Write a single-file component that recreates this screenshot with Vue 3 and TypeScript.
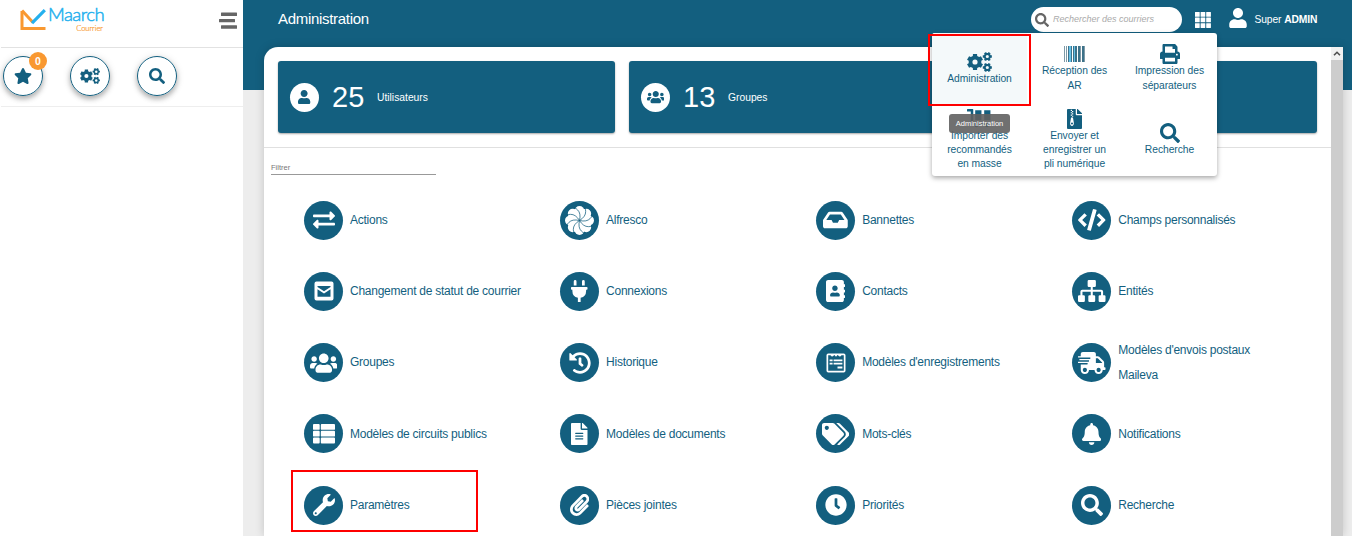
<script setup lang="ts">
interface Icon {
  w: number
  h: number
  d: string
}

const box = (x: number, y: number, w: number, h: number): string => `M${x} ${y}h${w}v${h}h${-w}z`

const rbox = (x: number, y: number, w: number, h: number, r: number): string =>
  `M${x + r} ${y}h${w - 2 * r}a${r} ${r} 0 0 1 ${r} ${r}v${h - 2 * r}a${r} ${r} 0 0 1 ${-r} ${r}h${2 * r - w}a${r} ${r} 0 0 1 ${-r} ${-r}v${2 * r - h}a${r} ${r} 0 0 1 ${r} ${-r}z`

const disc = (x: number, y: number, r: number): string =>
  `M${x - r} ${y}a${r} ${r} 0 1 0 ${2 * r} 0a${r} ${r} 0 1 0 ${-2 * r} 0z`

function gear(cx: number, cy: number, outer: number, inner: number, hole: number, teeth: number, turn: number): string {
  const points: string[] = []
  const step = (Math.PI * 2) / teeth
  for (let i = 0; i < teeth; i++) {
    const a = turn + i * step
    const corners: [number, number][] = [
      [-0.33, inner],
      [-0.24, outer],
      [0.24, outer],
      [0.33, inner],
    ]
    for (const [k, r] of corners) {
      points.push(`${(cx + Math.cos(a + k * step) * r).toFixed(1)} ${(cy + Math.sin(a + k * step) * r).toFixed(1)}`)
    }
  }
  return `M${points.join('L')}z${disc(cx, cy, hole)}`
}

const icons: Record<string, Icon> = {
  search: { w: 512, h: 512, d: 'M505 442.7L405.3 343c-4.5-4.5-10.6-7-17-7H372c27.6-35.3 44-79.7 44-128C416 93.1 322.9 0 208 0S0 93.1 0 208s93.1 208 208 208c48.3 0 92.7-16.4 128-44v16.3c0 6.4 2.5 12.5 7 17l99.7 99.7c9.4 9.4 24.6 9.4 33.9 0l28.3-28.3c9.4-9.4 9.4-24.6.1-34zM208 336c-70.7 0-128-57.2-128-128 0-70.7 57.2-128 128-128 70.7 0 128 57.2 128 128 0 70.7-57.2 128-128 128z' },
  star: { w: 576, h: 512, d: 'M259.3 17.8L194 150.2 47.9 171.5c-26.2 3.8-36.7 36.1-17.7 54.6l105.7 103-25 145.5c-4.5 26.3 23.2 46 46.4 33.7L288 439.6l130.7 68.7c23.2 12.2 50.9-7.4 46.4-33.7l-25-145.5 105.7-103c19-18.5 8.5-50.8-17.7-54.6L382 150.2 316.7 17.8c-11.7-23.6-45.6-23.9-57.4 0z' },
  user: { w: 448, h: 512, d: 'M224 256c70.7 0 128-57.3 128-128S294.7 0 224 0 96 57.3 96 128s57.3 128 128 128zm89.6 32h-16.7c-22.2 10.2-46.9 16-72.9 16s-50.6-5.8-72.9-16h-16.7C60.2 288 0 348.2 0 422.4V464c0 26.5 21.5 48 48 48h352c26.5 0 48-21.5 48-48v-41.6c0-74.2-60.2-134.4-134.4-134.4z' },
  users: { w: 640, h: 512, d: 'M96 224c35.3 0 64-28.7 64-64s-28.7-64-64-64-64 28.7-64 64 28.7 64 64 64zm448 0c35.3 0 64-28.7 64-64s-28.7-64-64-64-64 28.7-64 64 28.7 64 64 64zm32 32h-64c-17.6 0-33.5 7.1-45.1 18.6 40.3 22.1 68.9 62 75.1 109.4h66c17.7 0 32-14.3 32-32v-32c0-35.3-28.7-64-64-64zm-256 0c61.9 0 112-50.1 112-112S381.9 32 320 32 208 82.1 208 144s50.1 112 112 112zm76.8 32h-8.3c-20.8 10-43.9 16-68.5 16s-47.6-6-68.5-16h-8.3C179.6 288 128 339.6 128 403.2V432c0 26.5 21.5 48 48 48h288c26.5 0 48-21.5 48-48v-28.8c0-63.6-51.6-115.2-115.2-115.2zm-223.7-13.4C161.5 263.1 145.6 256 128 256H64c-35.3 0-64 28.7-64 64v32c0 17.7 14.3 32 32 32h65.9c6.3-47.4 34.9-87.3 75.2-109.4z' },
  cogs: { w: 640, h: 512, d: gear(205, 256, 212, 164, 66, 6, Math.PI / 2) + gear(520, 116, 120, 92, 40, 6, 0) + gear(520, 396, 120, 92, 40, 6, 0) },
  exchange: { w: 512, h: 512, d: 'M0 168v-16c0-13.255 10.745-24 24-24h360V80c0-21.367 25.899-32.042 40.971-16.971l80 80c9.372 9.373 9.372 24.569 0 33.941l-80 80C409.956 271.982 384 261.456 384 240v-48H24c-13.255 0-24-10.745-24-24zm488 152H128v-48c0-21.314-25.862-32.08-40.971-16.971l-80 80c-9.372 9.373-9.372 24.569 0 33.941l80 80C102.057 463.997 128 453.437 128 432v-48h360c13.255 0 24-10.745 24-24v-16c0-13.255-10.745-24-24-24z' },
  inbox: { w: 576, h: 512, d: 'M567.938 243.908L462.25 85.374A48.003 48.003 0 0 0 422.311 64H153.689a48 48 0 0 0-39.938 21.374L8.062 243.908A47.994 47.994 0 0 0 0 270.533V400c0 26.51 21.49 48 48 48h480c26.51 0 48-21.49 48-48V270.533a47.994 47.994 0 0 0-8.062-26.625zM162.252 128h251.497l85.333 128H376l-32 64H232l-32-64H76.918l85.334-128z' },
  code: { w: 640, h: 512, d: 'M150 96l56 54L98 256l108 106-56 54L10 276q-18-20 0-40zM490 96l-56 54 108 106-108 106 56 54 140-140q18-20 0-40zM360 2l66 18q8 4 6 12L300 500q-4 10-12 8l-68-18q-8-4-6-12L346 10q4-10 14-8z' },
  mail: { w: 20, h: 20, d: rbox(0.5, 0.5, 19, 19, 2) + 'M3.500 5h13v1L10 10.200 3.500 6zM3.500 8.300L10 12.600l6.500-4.300V15.700h-13z' },
  plug: { w: 384, h: 512, d: 'M320,32a32,32,0,0,0-64,0v96h64Zm48,128H16A16,16,0,0,0,0,176v32a16,16,0,0,0,16,16H32v32A160.07,160.07,0,0,0,160,412.8V512h64V412.8A160.07,160.07,0,0,0,352,256V224h16a16,16,0,0,0,16-16V176A16,16,0,0,0,368,160ZM128,32a32,32,0,0,0-64,0v96h64Z' },
  contacts: { w: 448, h: 512, d: 'M436 160c6.6 0 12-5.4 12-12v-40c0-6.6-5.4-12-12-12h-20V48c0-26.5-21.5-48-48-48H48C21.5 0 0 21.5 0 48v416c0 26.5 21.5 48 48 48h320c26.5 0 48-21.5 48-48v-48h20c6.6 0 12-5.4 12-12v-40c0-6.6-5.4-12-12-12h-20v-64h20c6.6 0 12-5.4 12-12v-40c0-6.6-5.4-12-12-12h-20v-64h20zm-228-32c35.3 0 64 28.7 64 64s-28.7 64-64 64-64-28.7-64-64 28.7-64 64-64zm112 236.8c0 10.6-10 19.2-22.4 19.2H118.4C106 384 96 375.4 96 364.8v-19.2c0-31.8 30.1-57.6 67.2-57.6h5c12.3 5.1 25.7 8 39.8 8s27.6-2.9 39.8-8h5c37.1 0 67.2 25.8 67.2 57.6v19.2z' },
  sitemap: { w: 640, h: 512, d: rbox(224, 0, 192, 160, 28) + rbox(0, 352, 160, 160, 28) + rbox(240, 352, 160, 160, 28) + rbox(480, 352, 160, 160, 28) + 'M296 160h48v64h196q44 0 44 44v84h-48v-80H344v80h-48v-80H104v80H56v-84q0-44 44-44h196z' },
  history: { w: 512, h: 512, d: 'M504 255.531c.253 136.64-111.18 248.372-247.82 248.468-59.015.042-113.223-20.53-155.822-54.911-11.077-8.94-11.905-25.541-1.839-35.607l11.267-11.267c8.609-8.609 22.353-9.551 31.891-1.984C173.062 425.135 212.781 440 256 440c101.705 0 184-82.311 184-184 0-101.705-82.311-184-184-184-48.814 0-93.149 18.969-126.068 49.932l50.754 50.754c10.08 10.08 2.941 27.314-11.313 27.314H24c-8.837 0-16-7.163-16-16V38.627c0-14.254 17.234-21.393 27.314-11.314l49.372 49.372C129.209 34.136 189.552 8 256 8c136.81 0 247.747 110.78 248 247.531zm-180.912 78.784l9.823-12.63c8.138-10.463 6.253-25.542-4.21-33.679L288 256.349V152c0-13.255-10.745-24-24-24h-16c-13.255 0-24 10.745-24 24v135.651l65.409 50.874c10.463 8.137 25.541 6.253 33.679-4.21z' },
  form: { w: 20, h: 20, d: rbox(0.5, 0.5, 19, 19, 1.8) + 'M2.200 2.200h2.300q1.500 2.300 3 .5q.8-.8 1.200-.5q1.300 2.400 2.600 0q.5-.3 1.200.5q1.500 1.800 3-.5h2.300v15.600H2.200z' + box(3.6, 6.4, 3, 1.8) + box(7.6, 6.4, 8.8, 1.8) + box(3.6, 9.8, 3, 1.8) + box(7.6, 9.8, 8.8, 1.8) + box(11.5, 13.6, 4.9, 2) },
  shipping: { w: 640, h: 512, d: 'M624 352h-16V243.9c0-12.7-5.1-24.9-14.1-33.9L494 110.1c-9-9-21.2-14.1-33.9-14.1H416V48c0-26.5-21.5-48-48-48H112C85.5 0 64 21.5 64 48v48H8c-4.4 0-8 3.6-8 8v16c0 4.4 3.6 8 8 8h272c4.4 0 8 3.6 8 8v16c0 4.4-3.6 8-8 8H40c-4.4 0-8 3.6-8 8v16c0 4.4 3.6 8 8 8h208c4.4 0 8 3.6 8 8v16c0 4.4-3.6 8-8 8H8c-4.4 0-8 3.6-8 8v16c0 4.4 3.6 8 8 8h208c4.4 0 8 3.6 8 8v16c0 4.4-3.6 8-8 8H64v128c0 53 43 96 96 96s96-43 96-96h128c0 53 43 96 96 96s96-43 96-96h48c8.8 0 16-7.2 16-16v-32c0-8.8-7.2-16-16-16zM160 464c-26.5 0-48-21.5-48-48s21.5-48 48-48 48 21.5 48 48-21.5 48-48 48zm320 0c-26.5 0-48-21.5-48-48s21.5-48 48-48 48 21.5 48 48-21.5 48-48 48zm80-208H416V144h44.1l99.9 99.9V256z' },
  list: { w: 22, h: 20, d: [0, 6.8, 13.6].map((y) => rbox(0, y, 6.7, 5.8, 0.9) + rbox(7.8, y, 14.2, 5.8, 0.9)).join('') },
  file: { w: 384, h: 512, d: 'M224 136V0H24C10.7 0 0 10.7 0 24v464c0 13.3 10.7 24 24 24h336c13.3 0 24-10.7 24-24V160H248c-13.2 0-24-10.8-24-24zm64 236c0 6.6-5.4 12-12 12H108c-6.6 0-12-5.4-12-12v-8c0-6.6 5.4-12 12-12h168c6.6 0 12 5.4 12 12v8zm0-64c0 6.6-5.4 12-12 12H108c-6.6 0-12-5.4-12-12v-8c0-6.6 5.4-12 12-12h168c6.6 0 12 5.4 12 12v8zm0-72v8c0 6.6-5.4 12-12 12H108c-6.6 0-12-5.4-12-12v-8c0-6.6 5.4-12 12-12h168c6.6 0 12 5.4 12 12zm96-114.1v6.1H256V0h6.1c6.4 0 12.5 2.5 17 7l97.9 98c4.5 4.5 7 10.6 7 16.9z' },
  tags: { w: 640, h: 512, d: 'M497.941 225.941L286.059 14.059A48 48 0 0 0 252.118 0H48C21.49 0 0 21.49 0 48v204.118a48 48 0 0 0 14.059 33.941l211.882 211.882c18.744 18.745 49.136 18.746 67.882 0l204.118-204.118c18.745-18.745 18.745-49.137 0-67.882zM112 160c-26.51 0-48-21.49-48-48s21.49-48 48-48 48 21.49 48 48-21.49 48-48 48zm513.941 133.823L421.823 497.941c-18.745 18.745-49.137 18.745-67.882 0l-.36-.36L527.64 323.522c16.999-16.999 26.36-39.6 26.36-63.64s-9.362-46.641-26.36-63.64L331.397 0h48.721a48 48 0 0 1 33.941 14.059l211.882 211.882c18.745 18.745 18.745 49.137 0 67.882z' },
  bell: { w: 448, h: 512, d: 'M224 512c35.32 0 63.97-28.65 63.97-64H160.03c0 35.35 28.65 64 63.97 64zm215.39-149.71c-19.32-20.76-55.47-51.99-55.47-154.29 0-77.7-54.48-139.9-127.94-155.16V32c0-17.67-14.32-32-31.98-32s-31.98 14.33-31.98 32v20.84C118.56 68.1 64.08 130.3 64.08 208c0 102.3-36.15 133.53-55.47 154.29-6 6.45-8.66 14.16-8.61 21.71.11 16.4 12.98 32 32.1 32h383.8c19.12 0 32-15.6 32.1-32 .05-7.55-2.61-15.27-8.61-21.71z' },
  wrench: { w: 512, h: 512, d: 'M507.73 109.1c-2.24-9.03-13.54-12.09-20.12-5.51l-74.36 74.36-67.88-11.31-11.31-67.88 74.36-74.36c6.62-6.62 3.43-17.9-5.66-20.16-47.38-11.74-99.55.91-136.58 37.93-39.64 39.64-50.55 97.1-34.05 147.2L18.74 402.76c-24.99 24.99-24.99 65.51 0 90.5 24.99 24.99 65.51 24.99 90.5 0l213.21-213.21c50.12 16.71 107.47 5.68 147.37-34.22 37.07-37.07 49.7-89.32 37.91-136.73zM64 472c-13.25 0-24-10.75-24-24 0-13.26 10.75-24 24-24s24 10.74 24 24c0 13.25-10.75 24-24 24z' },
  clip: { w: 448, h: 512, d: 'M43.246 466.142c-58.43-60.289-57.341-157.511 1.386-217.581L254.392 34c44.316-45.332 116.351-45.336 160.671 0 43.89 44.894 43.943 117.329 0 162.276L232.214 383.128c-29.855 30.537-78.633 30.111-107.982-.998-28.275-29.97-27.368-77.473 1.452-106.953l143.743-146.835c6.182-6.314 16.312-6.422 22.626-.241l22.861 22.379c6.315 6.182 6.422 16.312.241 22.626L171.427 319.927c-4.932 5.045-5.236 13.428-.648 18.292 4.372 4.634 11.245 4.711 15.688.165l182.849-186.851c19.613-20.062 19.613-52.725-.011-72.798-19.189-19.627-49.957-19.637-69.154 0L90.39 293.295c-34.763 35.56-35.299 93.12-1.191 128.313 34.01 35.093 88.985 35.137 123.058.286l172.06-175.999c6.177-6.319 16.307-6.433 22.626-.256l22.877 22.364c6.319 6.177 6.434 16.307.256 22.626l-172.06 175.998c-59.576 60.938-155.943 60.216-214.77-.485z' },
  clock: { w: 512, h: 512, d: 'M256,8C119,8,8,119,8,256S119,504,256,504,504,393,504,256,393,8,256,8Zm92.49,313h0l-20,25a16,16,0,0,1-22.49,2.5h0l-67-49.72a40,40,0,0,1-15-31.23V112a16,16,0,0,1,16-16h32a16,16,0,0,1,16,16V256l58,42.5A16,16,0,0,1,348.49,321Z' },
  print: { w: 512, h: 512, d: 'M448 192V77.25c0-8.49-3.37-16.62-9.37-22.63L393.37 9.37c-6-6-14.14-9.37-22.63-9.37H96C78.33 0 64 14.33 64 32v160c-35.35 0-64 28.65-64 64v112c0 8.84 7.16 16 16 16h48v96c0 17.67 14.33 32 32 32h320c17.67 0 32-14.33 32-32v-96h48c8.84 0 16-7.16 16-16V256c0-35.35-28.65-64-64-64zm-64 256H128v-96h256v96zm0-224H128V64h192v48c0 8.84 7.16 16 16 16h48v96zm48 72c-13.25 0-24-10.75-24-24 0-13.26 10.75-24 24-24s24 10.74 24 24c0 13.25-10.75 24-24 24z' },
  dolly: { w: 640, h: 512, d: 'M16 0h128q16 0 16 16v336h464q16 0 16 16v32q0 16-16 16h-64a48 48 0 1 1-96 0H288a48 48 0 1 1-96 0h-80q-16 0-16-16V64H16Q0 64 0 48V16Q0 0 16 0zM210 32h160v256H210zM440 32h160v256H440z' },
  zip: { w: 384, h: 512, d: 'M24 0h200v136q0 24 24 24h136v328q0 24-24 24H24q-24 0-24-24V24Q0 0 24 0zM256 0h6q10 0 17 7l98 98q7 7 7 17v6H256z' + box(96, 20, 32, 30) + box(128, 50, 32, 30) + box(96, 80, 32, 30) + box(128, 110, 32, 30) + box(96, 140, 32, 30) + box(128, 170, 32, 30) + 'M104 220h48l22 126c12 56-20 86-46 86s-60-28-46-86z' + disc(128, 370, 26) },
  grid: { w: 16, h: 16, d: [0, 5.6, 11.2].map((y) => [0, 5.6, 11.2].map((x) => rbox(x, y, 4.7, 4.7, 0.3)).join('')).join('') },
  bars: { w: 18, h: 17, d: rbox(2, 0.5, 16, 3.4, 0.5) + rbox(0, 6.9, 16, 3.4, 0.5) + rbox(2, 13.3, 16, 3.4, 0.5) },
}

interface Bar {
  x: number
  w: number
  tone: string
}

const barcode: Bar[] = [
  { x: 0, w: 1, tone: 'dim' },
  { x: 2, w: 1, tone: 'dim' },
  { x: 4, w: 1, tone: 'dark' },
  { x: 5, w: 2, tone: 'sky' },
  { x: 7, w: 1, tone: 'dark' },
  { x: 9, w: 1, tone: 'dark' },
  { x: 10, w: 1, tone: 'sky' },
  { x: 11, w: 2, tone: 'dark' },
  { x: 14, w: 2, tone: 'dark' },
  { x: 16, w: 1, tone: 'dim' },
  { x: 18, w: 2, tone: 'dark' },
  { x: 20, w: 1, tone: 'dim' },
]

const petals = [0, 45, 90, 135, 180, 225, 270, 315]

const entries: { icon: string; label: string[]; marked?: boolean }[] = [
  { icon: 'exchange', label: ['Actions'] },
  { icon: 'alfresco', label: ['Alfresco'] },
  { icon: 'inbox', label: ['Bannettes'] },
  { icon: 'code', label: ['Champs personnalisés'] },
  { icon: 'mail', label: ['Changement de statut de courrier'] },
  { icon: 'plug', label: ['Connexions'] },
  { icon: 'contacts', label: ['Contacts'] },
  { icon: 'sitemap', label: ['Entités'] },
  { icon: 'users', label: ['Groupes'] },
  { icon: 'history', label: ['Historique'] },
  { icon: 'form', label: ["Modèles d'enregistrements"] },
  { icon: 'shipping', label: ["Modèles d'envois postaux", 'Maileva'] },
  { icon: 'list', label: ['Modèles de circuits publics'] },
  { icon: 'file', label: ['Modèles de documents'] },
  { icon: 'tags', label: ['Mots-clés'] },
  { icon: 'bell', label: ['Notifications'] },
  { icon: 'wrench', label: ['Paramètres'], marked: true },
  { icon: 'clip', label: ['Pièces jointes'] },
  { icon: 'clock', label: ['Priorités'] },
  { icon: 'search', label: ['Recherche'] },
]

const shortcuts: { icon: string; lines: string[]; active?: boolean }[] = [
  { icon: 'cogs', lines: ['Administration'], active: true },
  { icon: 'barcode', lines: ['Réception des', 'AR'] },
  { icon: 'print', lines: ['Impression des', 'séparateurs'] },
  { icon: 'dolly', lines: ['Importer des', 'recommandés', 'en masse'] },
  { icon: 'zip', lines: ['Envoyer et', 'enregistrer un', 'pli numérique'] },
  { icon: 'search', lines: ['Recherche'] },
]

const stats = [
  { icon: 'user', value: '25', label: 'Utilisateurs' },
  { icon: 'users', value: '13', label: 'Groupes' },
  { icon: '', value: '', label: '' },
]

const quick = [
  { icon: 'star', badge: '0' },
  { icon: 'cogs', badge: '' },
  { icon: 'search', badge: '' },
]

const viewBox = (name: string): string => `0 0 ${icons[name].w} ${icons[name].h}`
</script>

<template>
  <div class="app">
    <aside class="side">
      <div class="brand">
        <svg class="mark" viewBox="0 0 26 24">
          <path d="M2 3v17.500h23.500" fill="none" stroke="#f99830" stroke-width="3" />
          <path d="M2 2.500L13 14.500" fill="none" stroke="#f99830" stroke-width="3" />
          <path d="M12 15.200L24.800 2.200" fill="none" stroke="#24b0ee" stroke-width="3.200" />
        </svg>
        <div class="name">
          <span class="title">Maarch</span>
          <span class="sub">Courrier</span>
        </div>
        <svg class="burger" :viewBox="viewBox('bars')"><path :d="icons.bars.d" /></svg>
      </div>
      <div class="quick">
        <div v-for="q in quick" :key="q.icon" class="round">
          <svg :class="['glyph', q.icon]" :viewBox="viewBox(q.icon)"><path :d="icons[q.icon].d" fill-rule="evenodd" /></svg>
          <span v-if="q.badge" class="badge">{{ q.badge }}</span>
        </div>
      </div>
    </aside>

    <main class="main">
      <header class="top">
        <h1>Administration</h1>
        <div class="find">
          <svg viewBox="0 0 512 512"><path :d="icons.search.d" fill-rule="evenodd" /></svg>
          <span>Rechercher des courriers</span>
        </div>
        <svg class="apps" :viewBox="viewBox('grid')"><path :d="icons.grid.d" /></svg>
        <svg class="avatar" :viewBox="viewBox('user')"><path :d="icons.user.d" /></svg>
        <div class="who">Super <b>ADMIN</b></div>
      </header>

      <section class="sheet">
        <div class="body">
          <div class="stats">
            <div v-for="(s, i) in stats" :key="i" class="stat">
              <template v-if="s.icon">
                <span class="pic">
                  <svg :class="s.icon" :viewBox="viewBox(s.icon)"><path :d="icons[s.icon].d" /></svg>
                </span>
                <span class="num">{{ s.value }}</span>
                <span class="cap">{{ s.label }}</span>
              </template>
            </div>
          </div>
          <div class="filter"><span>Filtrer</span></div>
          <div class="grid">
            <div v-for="e in entries" :key="e.icon" class="entry">
              <span class="dot">
                <svg v-if="e.icon === 'alfresco'" class="flower" viewBox="-14 -14 28 28">
                  <circle r="10" fill="#fff" />
                  <g v-for="a in petals" :key="a" :transform="`rotate(${a})`">
                    <circle cx="0" cy="-9.3" r="4.700" fill="#fff" />
                  </g>
                  <g v-for="a in petals" :key="`l${a}`" :transform="`rotate(${a})`">
                    <path d="M0 0Q-1.500 -7 -6 -8.500T-9 -8.500" class="seam" transform="rotate(25)" />
                  </g>
                </svg>
                <svg v-else :class="['glyph', e.icon]" :viewBox="viewBox(e.icon)"><path :d="icons[e.icon].d" fill-rule="evenodd" /></svg>
              </span>
              <span class="label"><span v-for="l in e.label" :key="l">{{ l }}</span></span>
            </div>
          </div>
        </div>
        <div class="scroll">
          <span class="up"><svg viewBox="0 0 8 5"><path d="M1 4.300L4 1.300l3 3" /></svg></span>
        </div>
      </section>
    </main>

    <nav class="menu">
      <div v-for="s in shortcuts" :key="s.icon" :class="['tile', { active: s.active }]">
        <svg v-if="s.icon === 'barcode'" class="codebar" viewBox="0 0 21 16">
          <rect v-for="b in barcode" :key="b.x" :x="b.x" y="0" :width="b.w" height="16" :class="b.tone" />
        </svg>
        <svg v-else :class="['glyph', s.icon]" :viewBox="viewBox(s.icon)"><path :d="icons[s.icon].d" fill-rule="evenodd" /></svg>
        <span v-for="l in s.lines" :key="l" class="line">{{ l }}</span>
      </div>
    </nav>
    <div class="tip">Administration</div>
    <div class="frame frame-menu"></div>
    <div class="frame frame-entry"></div>
  </div>
</template>

<style>
body {
  margin: 0;
  background: #fff;
}
</style>

<style scoped>
.app {
  position: relative;
  display: flex;
  width: 1352px;
  height: 536px;
  overflow: hidden;
  background: #fff;
  font-family: "Liberation Sans", Arial, sans-serif;
  color: #135f7f;
  white-space: nowrap;
}
svg {
  display: block;
  fill: currentColor;
  flex: none;
}
.side {
  box-sizing: border-box;
  width: 243px;
  padding-left: 1px;
  flex: none;
}
.brand {
  box-sizing: border-box;
  height: 48px;
  border-bottom: 1px solid #e2e2e2;
  display: flex;
  padding: 8px 0 0 19px;
}
.mark {
  width: 26px;
  height: 24px;
}
.name {
  width: 58px;
  margin: -4px 0 0 2px;
  display: flex;
  flex-direction: column;
  font-family: Lato, sans-serif;
  font-weight: 300;
}
.title {
  font-size: 18.500px;
  line-height: 21px;
  color: #24b0ee;
  -webkit-text-stroke: 0.5px #24b0ee;
  letter-spacing: -0.550px;
}
.sub {
  width: 55px;
  font-size: 7.500px;
  line-height: 8px;
  text-align: right;
  color: #f99830;
  -webkit-text-stroke: 0.2px #f99830;
}
.burger {
  width: 18px;
  height: 17px;
  margin: 4px 0 0 113px;
  color: #666;
}
.quick {
  box-sizing: border-box;
  height: 59px;
  border-bottom: 1px solid #eee;
  display: flex;
  gap: 27px;
  padding: 8px 0 0 2px;
}
.round {
  position: relative;
  box-sizing: border-box;
  width: 40px;
  height: 40px;
  border: 1.500px solid #135f7f;
  border-radius: 50%;
  display: flex;
  align-items: center;
  justify-content: center;
  box-shadow: 0 3px 5px rgba(0, 0, 0, 0.26), 0 1px 8px rgba(0, 0, 0, 0.12);
}
.round .glyph {
  height: 16px;
}
.badge {
  position: absolute;
  left: 25px;
  top: -5px;
  width: 18px;
  height: 18px;
  border-radius: 50%;
  background: #f99830;
  color: #fff;
  font-size: 10.500px;
  font-weight: 700;
  line-height: 19px;
  text-align: center;
}
.main {
  flex: 1;
  height: 536px;
  background: linear-gradient(#135f7f 90px, #ededed 90px);
}
.top {
  height: 47px;
  display: flex;
  color: #fff;
}
h1 {
  margin: 8px 0 0 35px;
  width: 753px;
  font-size: 15px;
  font-weight: 400;
  line-height: 22px;
  letter-spacing: -0.300px;
}
.find {
  box-sizing: border-box;
  width: 151px;
  height: 25px;
  margin-top: 7px;
  padding-left: 4px;
  border-radius: 13px;
  background: #fff;
  display: flex;
  align-items: center;
  gap: 4px;
  font-size: 9px;
  font-style: italic;
  color: #aaa;
}
.find span {
  margin-top: -1px;
}
.find svg {
  width: 14px;
  height: 14px;
  color: #666;
}
.apps {
  width: 16px;
  height: 16px;
  margin: 12px 0 0 13px;
}
.avatar {
  width: 18px;
  height: 20px;
  margin: 8px 0 0 18px;
}
.who {
  margin: 13px 0 0 7.500px;
  font-size: 10.300px;
  letter-spacing: -0.120px;
  line-height: 14px;
}
.sheet {
  width: 1079px;
  height: 489px;
  margin-left: 21px;
  border-radius: 14px 0 0 0;
  background: #fff;
  display: flex;
  overflow: hidden;
  box-shadow: 0 0 10px rgba(0, 0, 0, 0.18);
}
.body {
  width: 1067px;
  flex: none;
}
.stats {
  box-sizing: border-box;
  height: 101px;
  padding: 14px;
  display: flex;
  gap: 14px;
  border-bottom: 1px solid #e0e0e0;
}
.stat {
  box-sizing: border-box;
  flex: 1;
  height: 72px;
  padding-left: 12px;
  border-radius: 3px;
  background: #135f7f;
  box-shadow: 0 1px 2px rgba(0, 0, 0, 0.35);
  color: #fff;
  display: flex;
  align-items: center;
}
.pic {
  width: 29px;
  height: 29px;
  border-radius: 50%;
  background: #fff;
  color: #135f7f;
  display: flex;
  align-items: center;
  justify-content: center;
}
.pic svg {
  height: 14px;
}
.num {
  margin-left: 13px;
  width: 45px;
  font-size: 29px;
}
.cap {
  font-size: 10.300px;
}
.filter {
  box-sizing: border-box;
  width: 165px;
  height: 27px;
  margin-left: 7px;
  padding-top: 15px;
  border-bottom: 1px solid #999;
  color: #777;
  font-size: 7.500px;
  line-height: 10px;
}
.grid {
  display: grid;
  grid-template-columns: repeat(4, 256.100px);
  grid-auto-rows: 71.300px;
  margin: 9.400px 0 0 40px;
}
.entry {
  display: flex;
  align-items: center;
  gap: 7px;
}
.dot {
  width: 39px;
  height: 39px;
  border-radius: 50%;
  background: #135f7f;
  color: #fff;
  display: flex;
  align-items: center;
  justify-content: center;
}
.dot .glyph {
  height: 22px;
}
.dot .mail,
.dot .form,
.dot .list {
  height: 20px;
}
.flower {
  width: 29px;
  height: 29px;
}
.seam {
  fill: none;
  stroke: #135f7f;
  stroke-width: 0.650;
}
.label {
  display: flex;
  flex-direction: column;
  padding-top: 1px;
  font-size: 12px;
  letter-spacing: -0.250px;
  line-height: 25.500px;
}
.scroll {
  width: 12px;
  background: #cdcdcd;
}
.up {
  display: flex;
  height: 13px;
  background: #f1f1f1;
  align-items: center;
  justify-content: center;
}
.up svg {
  width: 8px;
  height: 5px;
  fill: none;
  stroke: #505050;
  stroke-width: 1.600;
}
.menu {
  position: absolute;
  left: 932px;
  top: 33px;
  width: 285px;
  height: 143px;
  display: grid;
  grid-template-columns: repeat(3, 1fr);
  grid-template-rows: repeat(2, 1fr);
  border-radius: 3px;
  background: #fff;
  overflow: hidden;
  box-shadow: 0 2px 5px rgba(0, 0, 0, 0.35);
}
.tile {
  display: flex;
  flex-direction: column;
  align-items: center;
  justify-content: center;
}
.active {
  background: #f4f9fa;
}
.tile .glyph {
  height: 20px;
}
.codebar {
  width: 21px;
  height: 16px;
  margin: 2px 0;
}
.dim {
  fill: #7e9aa8;
}
.dark {
  fill: #3d7289;
}
.sky {
  fill: #65bfe6;
}
.line {
  font-size: 10.300px;
  letter-spacing: -0.050px;
  line-height: 14.300px;
}
.tip {
  position: absolute;
  left: 949px;
  top: 114px;
  width: 61px;
  height: 19px;
  border-radius: 3px;
  background: rgba(97, 97, 97, 0.9);
  color: #fff;
  font-size: 7.500px;
  line-height: 20px;
  text-align: center;
}
.frame {
  position: absolute;
  box-sizing: border-box;
  border: 2px solid #fe0000;
}
.frame-menu {
  left: 928px;
  top: 34px;
  width: 103px;
  height: 72px;
}
.frame-entry {
  left: 291px;
  top: 470px;
  width: 187px;
  height: 62px;
}
</style>
